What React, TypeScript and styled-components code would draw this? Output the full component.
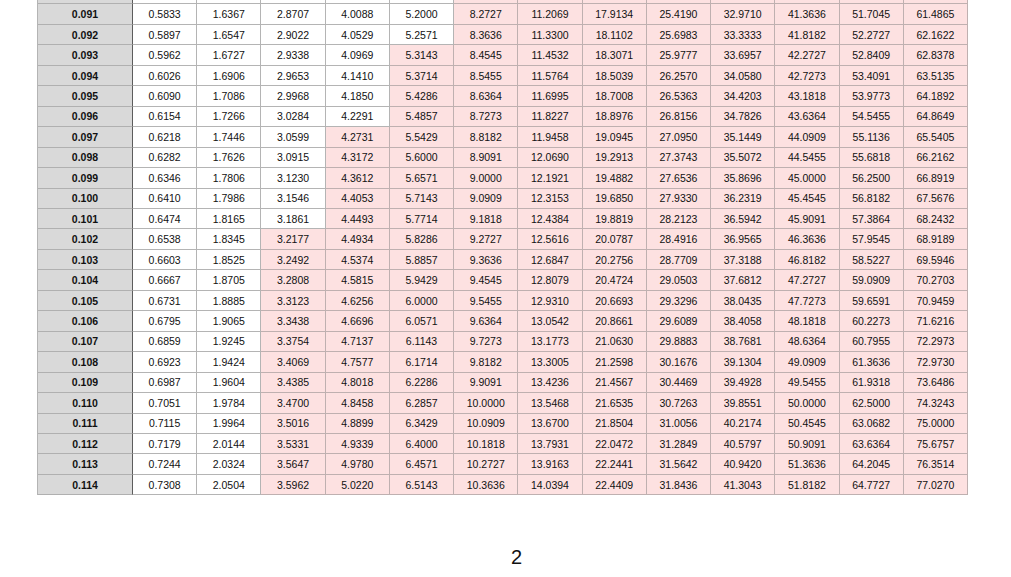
import React from 'react';
import styled, {createGlobalStyle} from 'styled-components';

const GlobalStyle = createGlobalStyle`
  html, body {
    margin: 0;
    padding: 0;
    background: #fff;
  }

  body {
    font-family: "Liberation Sans", Arial, Helvetica, sans-serif;
    color: #111;
    overflow: hidden;
  }
`;

const Page = styled.div`
  width: 1011px;
  height: 577px;
  overflow: hidden;
  padding-left: 37px;
  box-sizing: border-box;
`;

const Table = styled.div`
  width: 931px;
  margin-top: -16px;
  border-left: 1px solid #b4b4b4;
  box-sizing: border-box;
`;

const Row = styled.div`
  display: grid;
  grid-template-columns: 95px repeat(13, 1fr);
  height: 20.46px;
`;

const KeyCell = styled.div`
  display: flex;
  align-items: center;
  justify-content: center;
  background: #d9d9d9;
  border-right: 1.5px solid #5c5c5c;
  border-bottom: 1px solid #b0b0b0;
  font-size: 10.5px;
  font-weight: bold;
`;

const Cell = styled.div<{ $hot: boolean }>`
  display: flex;
  align-items: center;
  justify-content: center;
  background: ${p => (p.$hot ? '#fde1e1' : '#fff')};
  border-right: 1px solid ${p => (p.$hot ? '#bfb0b0' : '#b4b4b4')};
  border-bottom: 1px solid ${p => (p.$hot ? '#bfb0b0' : '#b4b4b4')};
  font-size: 10.5px;
`;

const PageNumber = styled.div`
  margin-top: 50px;
  padding-left: 474px;
  font-size: 20px;
  line-height: 24px;
  color: #111;
`;

// [key, first pink column (1-based), values...]; the first row is cut off at the top edge
const rows: [string, number, string[]][] = [
  ['', 6, Array(13).fill('')],
  ['0.091', 6, '0.5833 1.6367 2.8707 4.0088 5.2000 8.2727 11.2069 17.9134 25.4190 32.9710 41.3636 51.7045 61.4865'.split(' ')],
  ['0.092', 6, '0.5897 1.6547 2.9022 4.0529 5.2571 8.3636 11.3300 18.1102 25.6983 33.3333 41.8182 52.2727 62.1622'.split(' ')],
  ['0.093', 5, '0.5962 1.6727 2.9338 4.0969 5.3143 8.4545 11.4532 18.3071 25.9777 33.6957 42.2727 52.8409 62.8378'.split(' ')],
  ['0.094', 5, '0.6026 1.6906 2.9653 4.1410 5.3714 8.5455 11.5764 18.5039 26.2570 34.0580 42.7273 53.4091 63.5135'.split(' ')],
  ['0.095', 5, '0.6090 1.7086 2.9968 4.1850 5.4286 8.6364 11.6995 18.7008 26.5363 34.4203 43.1818 53.9773 64.1892'.split(' ')],
  ['0.096', 5, '0.6154 1.7266 3.0284 4.2291 5.4857 8.7273 11.8227 18.8976 26.8156 34.7826 43.6364 54.5455 64.8649'.split(' ')],
  ['0.097', 4, '0.6218 1.7446 3.0599 4.2731 5.5429 8.8182 11.9458 19.0945 27.0950 35.1449 44.0909 55.1136 65.5405'.split(' ')],
  ['0.098', 4, '0.6282 1.7626 3.0915 4.3172 5.6000 8.9091 12.0690 19.2913 27.3743 35.5072 44.5455 55.6818 66.2162'.split(' ')],
  ['0.099', 4, '0.6346 1.7806 3.1230 4.3612 5.6571 9.0000 12.1921 19.4882 27.6536 35.8696 45.0000 56.2500 66.8919'.split(' ')],
  ['0.100', 4, '0.6410 1.7986 3.1546 4.4053 5.7143 9.0909 12.3153 19.6850 27.9330 36.2319 45.4545 56.8182 67.5676'.split(' ')],
  ['0.101', 4, '0.6474 1.8165 3.1861 4.4493 5.7714 9.1818 12.4384 19.8819 28.2123 36.5942 45.9091 57.3864 68.2432'.split(' ')],
  ['0.102', 3, '0.6538 1.8345 3.2177 4.4934 5.8286 9.2727 12.5616 20.0787 28.4916 36.9565 46.3636 57.9545 68.9189'.split(' ')],
  ['0.103', 3, '0.6603 1.8525 3.2492 4.5374 5.8857 9.3636 12.6847 20.2756 28.7709 37.3188 46.8182 58.5227 69.5946'.split(' ')],
  ['0.104', 3, '0.6667 1.8705 3.2808 4.5815 5.9429 9.4545 12.8079 20.4724 29.0503 37.6812 47.2727 59.0909 70.2703'.split(' ')],
  ['0.105', 3, '0.6731 1.8885 3.3123 4.6256 6.0000 9.5455 12.9310 20.6693 29.3296 38.0435 47.7273 59.6591 70.9459'.split(' ')],
  ['0.106', 3, '0.6795 1.9065 3.3438 4.6696 6.0571 9.6364 13.0542 20.8661 29.6089 38.4058 48.1818 60.2273 71.6216'.split(' ')],
  ['0.107', 3, '0.6859 1.9245 3.3754 4.7137 6.1143 9.7273 13.1773 21.0630 29.8883 38.7681 48.6364 60.7955 72.2973'.split(' ')],
  ['0.108', 3, '0.6923 1.9424 3.4069 4.7577 6.1714 9.8182 13.3005 21.2598 30.1676 39.1304 49.0909 61.3636 72.9730'.split(' ')],
  ['0.109', 3, '0.6987 1.9604 3.4385 4.8018 6.2286 9.9091 13.4236 21.4567 30.4469 39.4928 49.5455 61.9318 73.6486'.split(' ')],
  ['0.110', 3, '0.7051 1.9784 3.4700 4.8458 6.2857 10.0000 13.5468 21.6535 30.7263 39.8551 50.0000 62.5000 74.3243'.split(' ')],
  ['0.111', 3, '0.7115 1.9964 3.5016 4.8899 6.3429 10.0909 13.6700 21.8504 31.0056 40.2174 50.4545 63.0682 75.0000'.split(' ')],
  ['0.112', 3, '0.7179 2.0144 3.5331 4.9339 6.4000 10.1818 13.7931 22.0472 31.2849 40.5797 50.9091 63.6364 75.6757'.split(' ')],
  ['0.113', 3, '0.7244 2.0324 3.5647 4.9780 6.4571 10.2727 13.9163 22.2441 31.5642 40.9420 51.3636 64.2045 76.3514'.split(' ')],
  ['0.114', 3, '0.7308 2.0504 3.5962 5.0220 6.5143 10.3636 14.0394 22.4409 31.8436 41.3043 51.8182 64.7727 77.0270'.split(' ')],
];

export default function App() {
  return (
    <>
      <GlobalStyle/>
      <Page>
        <Table>
          {rows.map(([key, pinkFrom, values], r) => (
            <Row key={r}>
              <KeyCell>{key}</KeyCell>
              {values.map((v, i) => (
                <Cell key={i} $hot={i + 1 >= pinkFrom}>{v}</Cell>
              ))}
            </Row>
          ))}
        </Table>
        <PageNumber>2</PageNumber>
      </Page>
    </>
  );
}
